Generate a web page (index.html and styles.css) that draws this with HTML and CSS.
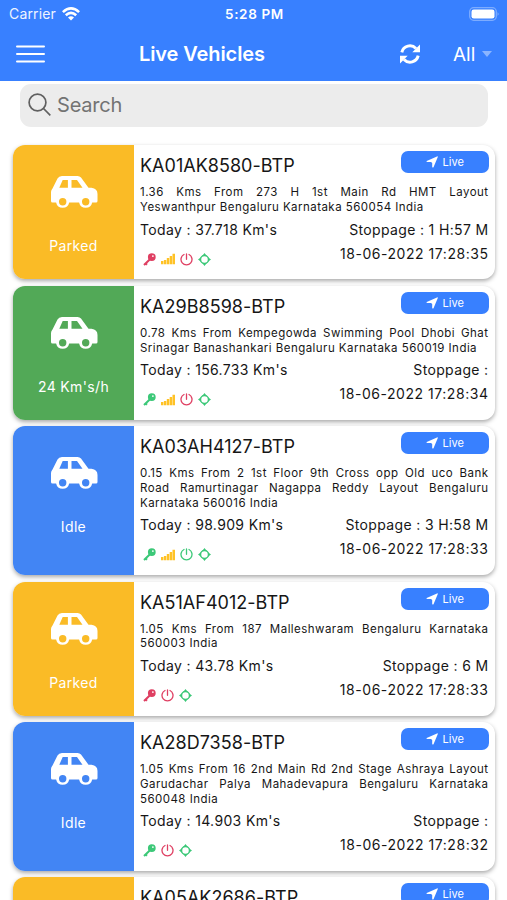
FILE: index.html
```html
<!DOCTYPE html>
<html lang="en">
<head>
<meta charset="utf-8">
<meta name="viewport" content="width=device-width, initial-scale=1">
<title>Live Vehicles</title>
<link rel="stylesheet" href="styles.css">
</head>
<body>
<svg class="defs" aria-hidden="true">
  <symbol id="car" viewBox="0 0 47 33"><path fill="currentColor" fill-rule="evenodd" d="M11 0H26.500Q28.800 0 30 1.500L37.500 11.700H40.500Q46.500 12.500 46.500 18V25Q46.500 26.500 45 26.500H41.200A6.700 6.700 0 0 1 28.100 26.500H18.200A6.700 6.700 0 0 1 5.100 26.500H1.500Q0 26.500 0 25V16Q0 14 1.500 12.500L6.500 2.500Q7.800 0 11 0ZM11.700 4L8.300 11.800H16.900V4ZM20.500 4V11.800H31.500L26 4ZM11.700 22A3.700 3.700 0 1 0 11.700 29.400A3.700 3.700 0 1 0 11.700 22ZM34.700 22A3.700 3.700 0 1 0 34.700 29.400A3.700 3.700 0 1 0 34.700 22Z"/></symbol>
  <symbol id="nav" viewBox="0 0 12 12"><path fill="currentColor" d="M11.300 .3Q12 .2 11.800 1L7.500 11.200Q6.800 12 6.200 11V7L5 5.900H1Q0 5.600 .7 4.900L11 .4Z"/></symbol>
  <symbol id="key" viewBox="0 0 13 13"><path d="M7.500 5.700L1 12M2.700 10.600L4 11.800" fill="none" stroke="currentColor" stroke-width="2"/><path fill="currentColor" fill-rule="evenodd" d="M8.800 .2A3.900 3.900 0 1 0 8.800 8A3.900 3.900 0 1 0 8.800 .2ZM9.900 2.200A.9 .9 0 1 1 9.900 4A.9 .9 0 1 1 9.900 2.200Z"/></symbol>
  <symbol id="signal" viewBox="0 0 14 12"><path fill="currentColor" d="M0 8h2.400v3.300H0zM2.900 7h2.400v4.300H2.900zM5.800 5h2.400v6.300H5.800zM8.700 3h2.400v8.300H8.700zM11.500 .7h2.500V11.300h-2.500z"/></symbol>
  <symbol id="power" viewBox="0 0 13 13"><path fill="none" stroke="currentColor" stroke-width="1.300" stroke-linecap="round" d="M4 1.500A5.500 5.500 0 1 0 9 1.500M6.500 1V6.300"/></symbol>
  <symbol id="locate" viewBox="0 0 13 13"><circle cx="6.500" cy="6.500" r="4" fill="none" stroke="currentColor" stroke-width="1.500"/><path fill="currentColor" d="M6.500 0L8.800 3H4.200ZM6.500 13L4.200 10H8.800ZM0 6.500L3 4.200V8.800ZM13 6.500L10 8.800V4.200Z"/></symbol>
</svg>

<header class="top">
  <div class="status">
    <span class="carrier">Carrier
      <svg class="wifi" viewBox="0 0 18 14"><g fill="none" stroke="currentColor" stroke-width="2.600"><path d="M.9 5.100Q9-2.300 17.100 5.100M3.800 8.200Q9 3.500 14.200 8.200"/></g><path fill="currentColor" d="M6 10.400Q9 7.900 12 10.400L9 13.600Z"/></svg>
    </span>
    <span class="time">5:28 PM</span>
    <svg class="battery" viewBox="0 0 31 14"><rect x=".7" y=".7" width="26.600" height="12.600" rx="4" fill="none" stroke="#fff" stroke-opacity=".35" stroke-width="1.300"/><rect x="2.500" y="2.500" width="23" height="9" rx="2.300" fill="#fff"/><path d="M28.700 5Q30.500 7 28.700 9Z" fill="#fff" fill-opacity=".5"/></svg>
  </div>
  <div class="bar">
    <svg class="menu" viewBox="0 0 29 18"><path d="M1 1.500H28M1 9H28M1 16.500H28" stroke="currentColor" stroke-width="2" stroke-linecap="round"/></svg>
    <h1>Live Vehicles</h1>
    <svg class="refresh" viewBox="0 0 20 20"><path d="M1.800 8.300A8.300 8.300 0 0 1 16 4.600M18.200 11.700A8.300 8.300 0 0 1 4 15.400" fill="none" stroke="currentColor" stroke-width="3"/><path fill="currentColor" d="M20 .6V8.300H12.300ZM0 19.400V11.700H7.700Z"/></svg>
    <span class="filter">All</span>
    <i class="caret"></i>
  </div>
</header>

<div class="search">
  <svg viewBox="0 0 24 24"><g fill="none" stroke="currentColor" stroke-width="1.700"><circle cx="9.500" cy="9.500" r="8.400"/><path d="M15.500 15.500L22.300 22.300"/></g></svg>
  <span>Search</span>
</div>

<main class="list">
  <article class="card parked">
    <div class="state"><svg><use href="#car"/></svg><span>Parked</span></div>
    <div class="info">
      <div class="head"><h2>KA01AK8580-BTP</h2><span class="live"><svg><use href="#nav"/></svg>Live</span></div>
      <p class="address"><span>1.36 Kms From 273 H 1st Main Rd HMT Layout</span><span>Yeswanthpur Bengaluru Karnataka 560054 India</span></p>
      <div class="row"><span>Today : 37.718 Km's</span><span>Stoppage : 1 H:57 M</span></div>
      <div class="foot"><div class="icons"><svg class="off"><use href="#key"/></svg><svg class="sig"><use href="#signal"/></svg><svg class="off"><use href="#power"/></svg><svg class="on"><use href="#locate"/></svg></div><time>18-06-2022 17:28:35</time></div>
    </div>
  </article>

  <article class="card moving">
    <div class="state"><svg><use href="#car"/></svg><span>24 Km's/h</span></div>
    <div class="info">
      <div class="head"><h2>KA29B8598-BTP</h2><span class="live"><svg><use href="#nav"/></svg>Live</span></div>
      <p class="address"><span>0.78 Kms From Kempegowda Swimming Pool Dhobi Ghat</span><span>Srinagar Banashankari Bengaluru Karnataka 560019 India</span></p>
      <div class="row"><span>Today : 156.733 Km's</span><span>Stoppage :</span></div>
      <div class="foot"><div class="icons"><svg class="on"><use href="#key"/></svg><svg class="sig"><use href="#signal"/></svg><svg class="off"><use href="#power"/></svg><svg class="on"><use href="#locate"/></svg></div><time>18-06-2022 17:28:34</time></div>
    </div>
  </article>

  <article class="card idle">
    <div class="state"><svg><use href="#car"/></svg><span>Idle</span></div>
    <div class="info">
      <div class="head"><h2>KA03AH4127-BTP</h2><span class="live"><svg><use href="#nav"/></svg>Live</span></div>
      <p class="address"><span>0.15 Kms From 2 1st Floor 9th Cross opp Old uco Bank</span><span>Road Ramurtinagar Nagappa Reddy Layout Bengaluru</span><span>Karnataka 560016 India</span></p>
      <div class="row"><span>Today : 98.909 Km's</span><span>Stoppage : 3 H:58 M</span></div>
      <div class="foot"><div class="icons"><svg class="on"><use href="#key"/></svg><svg class="sig"><use href="#signal"/></svg><svg class="on"><use href="#power"/></svg><svg class="on"><use href="#locate"/></svg></div><time>18-06-2022 17:28:33</time></div>
    </div>
  </article>

  <article class="card parked">
    <div class="state"><svg><use href="#car"/></svg><span>Parked</span></div>
    <div class="info">
      <div class="head"><h2>KA51AF4012-BTP</h2><span class="live"><svg><use href="#nav"/></svg>Live</span></div>
      <p class="address"><span>1.05 Kms From 187 Malleshwaram Bengaluru Karnataka</span><span>560003 India</span></p>
      <div class="row"><span>Today : 43.78 Km's</span><span>Stoppage : 6 M</span></div>
      <div class="foot"><div class="icons"><svg class="off"><use href="#key"/></svg><svg class="off"><use href="#power"/></svg><svg class="on"><use href="#locate"/></svg></div><time>18-06-2022 17:28:33</time></div>
    </div>
  </article>

  <article class="card idle">
    <div class="state"><svg><use href="#car"/></svg><span>Idle</span></div>
    <div class="info">
      <div class="head"><h2>KA28D7358-BTP</h2><span class="live"><svg><use href="#nav"/></svg>Live</span></div>
      <p class="address"><span>1.05 Kms From 16 2nd Main Rd 2nd Stage Ashraya Layout</span><span>Garudachar Palya Mahadevapura Bengaluru Karnataka</span><span>560048 India</span></p>
      <div class="row"><span>Today : 14.903 Km's</span><span>Stoppage :</span></div>
      <div class="foot"><div class="icons"><svg class="on"><use href="#key"/></svg><svg class="off"><use href="#power"/></svg><svg class="on"><use href="#locate"/></svg></div><time>18-06-2022 17:28:32</time></div>
    </div>
  </article>

  <article class="card parked">
    <div class="state"></div>
    <div class="info">
      <div class="head"><h2>KA05AK2686-BTP</h2><span class="live"><svg><use href="#nav"/></svg>Live</span></div>
    </div>
  </article>
</main>
</body>
</html>
```
FILE: styles.css
```css
* { box-sizing: border-box; }
html, body { margin: 0; height: 900px; overflow: hidden; background: #fff; }
body { display: flex; flex-direction: column; font-family: Inter, "Liberation Sans", sans-serif; color: #161616; }
svg { display: block; flex: none; }
.defs { position: absolute; width: 0; height: 0; }

.top { flex: none; height: 81px; background: #3880ff; color: #fff; }
.status { display: grid; grid-template-columns: 1fr auto 1fr; align-items: center; height: 27px; padding: 0 7px 0 9px; font-size: 14px; }
.carrier { display: flex; align-items: center; gap: 6px; letter-spacing: .15px; color: #eef4ff; }
.wifi { width: 18px; height: 14px; color: #fff; }
.time { font-weight: 600; font-size: 13.500px; letter-spacing: .65px; }
.battery { width: 31px; height: 14px; justify-self: end; }
.bar { display: flex; align-items: center; height: 54px; padding: 0 14px 0 16px; }
.menu { width: 29px; height: 18px; margin-right: 94px; }
h1 { margin: 0; font-size: 20px; font-weight: 600; letter-spacing: -.1px; width: 261px; white-space: nowrap; }
.refresh { width: 20px; height: 20px; margin-right: 33px; }
.filter { width: 29px; font-size: 19px; }
.caret { border: solid transparent; border-width: 6px 5.500px 0; border-top-color: #8bb5ff; }

.search { display: flex; flex: none; align-items: center; gap: 5px; height: 43px; margin: 2.500px 19px 0 20px; padding-left: 8px; border-radius: 11px; background: #ececec; color: #737373; font-size: 20px; letter-spacing: -.2px; }
.search svg { width: 24px; height: 24px; color: #606060; }

.list { display: flex; flex: 1; flex-direction: column; gap: 6.400px; min-height: 0; overflow: hidden; padding: 18.800px 12px 0 13px; }
.card { display: flex; flex: none; min-height: 134.200px; border-radius: 12px; background: #fff; box-shadow: 0 2px 4px rgba(0, 0, 0, .34); }
.state { display: flex; flex-direction: column; align-items: center; width: 121px; padding-top: 31px; border-radius: 12px 0 0 12px; color: #fff; font-size: 14px; letter-spacing: .35px; }
.state svg { width: 47px; height: 33px; margin-left: 1.500px; }
.state span { margin-top: 28px; line-height: 18px; }
.parked .state { background: #fabb26; }
.moving .state { background: #52a957; }
.idle .state { background: #4285f4; }

.info { flex: 1; padding: 6px 6.500px 13.900px 6px; min-width: 0; }
.head { display: flex; justify-content: space-between; height: 34px; }
h2 { margin: 4px 0 0; font-size: 18px; line-height: 22px; font-weight: 400; letter-spacing: .02px; white-space: nowrap; }
.live { display: flex; align-items: center; justify-content: center; gap: 5px; width: 87.500px; height: 22px; border-radius: 7px; background: #3880ff; color: #fff; font-size: 11px; }
.live svg { width: 12px; height: 12px; }
.address { margin: 0; font-size: 11.500px; letter-spacing: .46px; }
.address span { display: block; height: 14.650px; line-height: 14.650px; white-space: nowrap; text-align-last: justify; }
.address span:last-child { text-align-last: left; }
.row { display: flex; justify-content: space-between; margin-top: 6px; font-size: 14px; line-height: 18px; letter-spacing: .35px; white-space: nowrap; }
.foot { display: flex; justify-content: space-between; margin-top: 6px; font-size: 14px; line-height: 18px; letter-spacing: .54px; }
.icons { display: flex; align-items: center; gap: 5px; height: 13px; margin: 8px 0 0 2.500px; }
.icons svg { width: 13px; height: 13px; }
.icons .sig { width: 14px; height: 12px; color: #ffc226; }
.off { color: #df3f62; }
.on { color: #3cc878; }
```
